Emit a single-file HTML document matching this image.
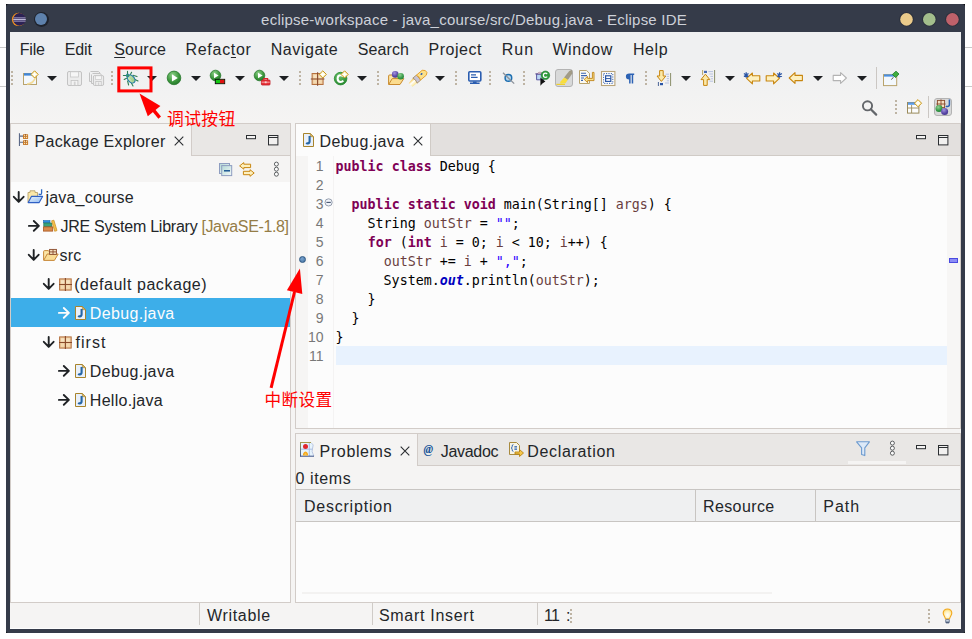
<!DOCTYPE html>
<html lang="zh">
<head>
<meta charset="utf-8">
<title>eclipse-workspace - java_course/src/Debug.java - Eclipse IDE</title>
<style>
html,body{margin:0;padding:0}
body{width:972px;height:639px;position:relative;overflow:hidden;background:#fff;font-family:"Liberation Sans","Noto Sans CJK SC",sans-serif}
.a{position:absolute}
.t{position:absolute;white-space:pre;line-height:20px;font-family:"Liberation Sans","Noto Sans CJK SC",sans-serif}
.t u{text-decoration-thickness:1px;text-underline-offset:2px}
svg{position:absolute;overflow:visible}
.dd{position:absolute;width:0;height:0;border-left:5px solid transparent;border-right:5px solid transparent;border-top:5px solid #1d1f22;top:76px}
.sep{position:absolute;width:2px;height:14px;top:71px;background:repeating-linear-gradient(to bottom,#beb4a4 0,#beb4a4 2px,transparent 2px,transparent 4px)}
.code{position:absolute;left:335.6px;top:157px;letter-spacing:-0.02px;font-family:"DejaVu Sans Mono","Liberation Mono",monospace;font-size:13.33px;line-height:19px;color:#000;white-space:pre}
.code b{color:#7f0055}
.code .s{color:#2a00ff}
.code .v{color:#6a3e3e}
.code .f{color:#0000c0;font-weight:bold;font-style:italic}
.ln{position:absolute;left:296px;width:27.6px;text-align:right;top:157px;font-size:14px;line-height:19px;color:#787878;white-space:pre}
.cn{position:absolute;font-weight:400;font-family:"Liberation Sans","Noto Sans CJK SC",sans-serif;color:#ff0000;white-space:pre;line-height:20px}
</style>
</head>
<body>
<!-- page remnants outside the window -->
<div class="a" style="left:0;top:47px;width:6px;height:1px;background:#c9c9c9"></div>
<div class="a" style="left:0;top:86px;width:6px;height:1px;background:#c9c9c9"></div>
<div class="a" style="left:965px;top:47px;width:7px;height:1px;background:#c9c9c9"></div>
<div class="a" style="left:965px;top:86px;width:7px;height:1px;background:#c9c9c9"></div>
<!-- window frame -->
<div class="a" style="left:6px;top:4px;width:959px;height:629px;background:#0c0d10"></div>
<div class="a" style="left:6px;top:4px;width:959px;height:629px;background:#353b49;border-radius:3px 3px 2px 2px"></div>
<!-- client area -->
<div class="a" style="left:10px;top:32px;width:951px;height:597px;background:#eff0f1"></div>
<div class="a" style="left:10px;top:62px;width:951px;height:62px;background:linear-gradient(to bottom,#eff0f1,#f5f4f3)"></div>
<div class="a" style="left:10px;top:123px;width:951px;height:506px;background:#f5f4f3"></div>
<!-- title bar icons -->
<svg style="left:11px;top:12px" width="16" height="15" viewBox="0 0 16 15"><circle cx="7.6" cy="7.4" r="6.7" fill="#f7941e"/><circle cx="8.5" cy="7.4" r="6.3" fill="#2c2255"/><rect x="2.6" y="5.4" width="12" height="1" fill="#a9a4c8"/><rect x="2.2" y="7" width="12.6" height="1" fill="#bdb9d6"/><rect x="2.6" y="8.6" width="12" height="1" fill="#a9a4c8"/></svg>
<div class="a" style="left:33.8px;top:11.9px;width:14.8px;height:14.8px;border-radius:50%;background:#1f232d"></div>
<div class="a" style="left:35.3px;top:13.4px;width:11.8px;height:11.8px;border-radius:50%;background:#5e81ac"></div>
<svg style="left:895px;top:10px" width="66" height="20" viewBox="0 0 66 20"><circle cx="11.5" cy="9.4" r="7.2" fill="#2a2f3b"/><circle cx="11.5" cy="9.4" r="6.3" fill="#ebcb8b"/><circle cx="34.3" cy="9.4" r="7.2" fill="#2a2f3b"/><circle cx="34.3" cy="9.4" r="6.3" fill="#a3be8c"/><circle cx="57.4" cy="9.4" r="7.2" fill="#2a2f3b"/><circle cx="57.4" cy="9.4" r="6.3" fill="#bf616a"/></svg>
<!-- ===== main toolbar ===== -->
<div class="sep" style="left:11px;top:71px;height:14px"></div>
<svg style="left:23px;top:70px" width="16" height="16" viewBox="0 0 16 16"><rect x="0.5" y="3.5" width="13" height="11" fill="#f3f8fd" stroke="#b9a36c"/><rect x="1" y="3.2" width="12" height="2.4" fill="#3f86d8"/><path d="M4 14Q11 13.5 12.5 7" stroke="#f3dc9a" stroke-width="1.6" fill="none"/><path d="M11.6 0.8000000000000003L15.2 4.4L11.6 8.0L8.0 4.4Z" fill="#fdf3c4" stroke="#c9961d" stroke-width="1"/><path d="M11.6 2.4000000000000004V6.4M9.6 4.4H13.6" stroke="#ffffff" stroke-width="1.2"/></svg>
<div class="dd" style="left:47px"></div>
<svg style="left:67px;top:71px" width="16" height="16" viewBox="0 0 16 16"><path d="M2.0 0.5H13.0Q14.5 0.5 14.5 2V13Q14.5 14.5 13.0 14.5H2.0Q0.5 14.5 0.5 13V2Q0.5 0.5 2.0 0.5Z" fill="#ececec" stroke="#c3c3c3" stroke-width="1"/><rect x="3.5" y="0.8" width="8" height="5.2" fill="#f6f6f6" stroke="#c9c9c9" stroke-width="0.8"/><rect x="4.1" y="9.4" width="6.8" height="5" fill="#f3f3f3" stroke="#c3c3c3" stroke-width="0.8"/><rect x="6.8" y="10.6" width="1.8" height="3.4" fill="#d2d2d2"/></svg>
<svg style="left:89px;top:71px" width="16" height="16" viewBox="0 0 16 16"><path d="M1.5 0.5H9.5L11 2V3" fill="#ececec" stroke="#c3c3c3"/><path d="M0.5 1.5V10.5H3" fill="none" stroke="#c3c3c3"/><path d="M3.5 2.5H11L12.5 4V5" fill="#ececec" stroke="#c3c3c3"/><path d="M2.5 3.5V12.5H5" fill="none" stroke="#c3c3c3"/><path d="M5.6 4.5H13.2Q14.6 4.5 14.6 6V13Q14.6 14.5 13.2 14.5H5.6Q4.4 14.5 4.4 13V6Q4.4 4.5 5.6 4.5Z" fill="#ececec" stroke="#c3c3c3"/><rect x="6.4" y="4.8" width="6" height="3.6" fill="#f6f6f6" stroke="#c9c9c9" stroke-width="0.7"/><rect x="6.8" y="10.4" width="5.4" height="4" fill="#f3f3f3" stroke="#c3c3c3" stroke-width="0.8"/><rect x="8.8" y="11.4" width="1.5" height="2.6" fill="#d2d2d2"/></svg>
<div class="sep" style="left:111px;top:71px;height:14px"></div>
<svg style="left:123px;top:71px" width="16" height="16" viewBox="0 0 16 16"><g stroke="#2f7d52" stroke-width="1.1" fill="none" stroke-linecap="round"><path d="M4.5 3.2V0.4M7.4 3.6L8.6 1.2M3.2 4.5H0.4M4 7L1.2 8.4M4.6 10L5.6 14M8.4 12L10 15M10 4.2L14 5.6M12 8.5L15 10"/></g><linearGradient id="gbug" x1="0" y1="0" x2="1" y2="1"><stop offset="0" stop-color="#e3f3d6"/><stop offset="1" stop-color="#86bf6c"/></linearGradient><ellipse cx="8.2" cy="8" rx="3.1" ry="4.6" transform="rotate(-42 8.2 8)" fill="url(#gbug)" stroke="#1f78a8" stroke-width="1.1"/><path d="M6.6 6.2L10 10" stroke="#9fcf8c" stroke-width="0.8"/><circle cx="4.7" cy="4.5" r="1.5" fill="#3c9a5c" stroke="#1f78a8" stroke-width="0.8"/></svg>
<div class="dd" style="left:147px"></div>
<svg style="left:166px;top:70px" width="16" height="16" viewBox="0 0 16 16"><radialGradient id="g1" cx="0.4" cy="0.3" r="0.8"><stop offset="0" stop-color="#8fd08a"/><stop offset="0.55" stop-color="#3f9a3f"/><stop offset="1" stop-color="#1f6f25"/></radialGradient><circle cx="8" cy="7.9" r="6.8" fill="url(#g1)" stroke="#2a7a2e" stroke-width="0.8"/><path d="M5.952 4.316L11.84 7.9L5.952 11.484000000000002Z" fill="#ffffff"/></svg>
<div class="dd" style="left:191px"></div>
<svg style="left:209px;top:69px" width="17" height="16" viewBox="0 0 17 16"><radialGradient id="g2" cx="0.4" cy="0.3" r="0.8"><stop offset="0" stop-color="#8fd08a"/><stop offset="0.55" stop-color="#3f9a3f"/><stop offset="1" stop-color="#1f6f25"/></radialGradient><circle cx="6.5" cy="6.5" r="5.3" fill="url(#g2)" stroke="#2a7a2e" stroke-width="0.8"/><path d="M5.0 3.6999999999999997L9.6 6.5L5.0 9.3Z" fill="#ffffff"/><rect x="6.3" y="10.3" width="9.4" height="4.4" fill="#12c812" stroke="#0a0a0a" stroke-width="0.9"/><rect x="11" y="10.8" width="4.3" height="3.4" fill="#e01010"/></svg>
<div class="dd" style="left:235px"></div>
<svg style="left:253px;top:69px" width="18" height="17" viewBox="0 0 18 17"><radialGradient id="g3" cx="0.4" cy="0.3" r="0.8"><stop offset="0" stop-color="#8fd08a"/><stop offset="0.55" stop-color="#3f9a3f"/><stop offset="1" stop-color="#1f6f25"/></radialGradient><circle cx="6.5" cy="6.5" r="5.3" fill="url(#g3)" stroke="#2a7a2e" stroke-width="0.8"/><path d="M5.0 3.6999999999999997L9.6 6.5L5.0 9.3Z" fill="#ffffff"/><rect x="8.4" y="11" width="8.6" height="5" rx="0.8" fill="#e8343a" stroke="#c01820" stroke-width="0.8"/><path d="M10.8 11V9.6H14.6V11" fill="none" stroke="#d8222a" stroke-width="1.2"/><path d="M8.6 13.2H16.8" stroke="#f7b0b2" stroke-width="0.9"/><rect x="11.8" y="12.4" width="1.8" height="1.8" fill="#f7d0d0"/></svg>
<div class="dd" style="left:279px"></div>
<div class="sep" style="left:299px;top:71px;height:14px"></div>
<svg style="left:311px;top:70px" width="16" height="16" viewBox="0 0 16 16"><rect x="1.1" y="3.5" width="11" height="11" fill="#ecc79a" stroke="#b5713f"/><rect x="2.4" y="4.8" width="3.4" height="3.4" fill="#f6e2c0"/><rect x="7.3999999999999995" y="4.8" width="3.4" height="3.4" fill="#f6e2c0"/><rect x="2.4" y="9.8" width="3.4" height="3.4" fill="#f3d9b0"/><rect x="7.3999999999999995" y="9.8" width="3.4" height="3.4" fill="#f3d9b0"/><path d="M-0.20000000000000007 9.0H13.4M6.6 2.2V15.8" stroke="#8a4b2c" stroke-width="1.1"/><path d="M11.8 0.8000000000000003L15.4 4.4L11.8 8.0L8.200000000000001 4.4Z" fill="#fdf3c4" stroke="#c9961d" stroke-width="1"/><path d="M11.8 2.4000000000000004V6.4M9.8 4.4H13.8" stroke="#ffffff" stroke-width="1.2"/></svg>
<svg style="left:334px;top:70px" width="16" height="16" viewBox="0 0 16 16"><radialGradient id="g4" cx="0.4" cy="0.3" r="0.8"><stop offset="0" stop-color="#6cc46a"/><stop offset="1" stop-color="#1f7f2a"/></radialGradient><circle cx="6.6" cy="8.6" r="6.3" fill="url(#g4)" stroke="#238a2c" stroke-width="0.8"/><path d="M9.3 6.6Q8.2 5.2 6.6 5.2Q3.6 5.2 3.6 8.6Q3.6 12 6.6 12Q8.2 12 9.3 10.6" fill="none" stroke="#ffffff" stroke-width="2"/><path d="M10.6 0.8000000000000003L14.2 4.4L10.6 8.0L7.0 4.4Z" fill="#fdf3c4" stroke="#c9961d" stroke-width="1"/><path d="M10.6 2.4000000000000004V6.4M8.6 4.4H12.6" stroke="#ffffff" stroke-width="1.2"/></svg>
<div class="dd" style="left:357px"></div>
<div class="sep" style="left:377px;top:71px;height:14px"></div>
<svg style="left:388px;top:70px" width="17" height="16" viewBox="0 0 17 16"><path d="M0.6 14.4V6Q0.6 5 1.6 5H5.6L6.8 6.4H12.4V9" fill="#fbe5a6" stroke="#c98a2e"/><path d="M0.7 14.5L4.2 8.6H15.8L12 14.5Z" fill="#fbdc8e" stroke="#c98a2e" stroke-linejoin="round"/><radialGradient id="g5" cx="0.4" cy="0.3" r="0.8"><stop offset="0" stop-color="#a594de"/><stop offset="0.6" stop-color="#5a48a8"/><stop offset="1" stop-color="#3f2f86"/></radialGradient><circle cx="7.2" cy="4.4" r="3.3" fill="url(#g5)"/><radialGradient id="g6" cx="0.4" cy="0.3" r="0.8"><stop offset="0" stop-color="#93d092"/><stop offset="0.6" stop-color="#379a48"/><stop offset="1" stop-color="#1f7a32"/></radialGradient><circle cx="12.6" cy="6.2" r="3.3" fill="url(#g6)"/></svg>
<svg style="left:410px;top:70px" width="17" height="16" viewBox="0 0 17 16"><linearGradient id="gfl" x1="0" y1="0" x2="0" y2="1"><stop offset="0" stop-color="#f7c23c"/><stop offset="0.45" stop-color="#ffffff"/><stop offset="1" stop-color="#fbe48e"/></linearGradient><g transform="translate(0.1 14.8) rotate(-40.5)"><path d="M0 -2.2L6.8 -3.2V3.2L0.6 3Z" fill="url(#gfl)"/><path d="M6.4 -3.3H11.2V3.3H6.4Q8 0 6.4 -3.3Z" fill="#c9c4d4" stroke="#9a7f4a" stroke-width="0.7"/><path d="M11 -3.2H18.6L20.8 -1V1.6L18.6 3.2H11Q12.6 0 11 -3.2Z" fill="#fbe08a" stroke="#e5a02a" stroke-width="0.9"/><rect x="14.6" y="-1.6" width="2.2" height="1.6" rx="0.6" fill="#2d5fb5"/></g></svg>
<div class="dd" style="left:435px"></div>
<div class="sep" style="left:455px;top:71px;height:14px"></div>
<svg style="left:468px;top:71px" width="14" height="14" viewBox="0 0 14 14"><rect x="0.8" y="0.8" width="12" height="9.2" rx="1" fill="#ffffff" stroke="#2a5db0" stroke-width="1.6"/><path d="M3 3.8H8M3 6.4H9.6" stroke="#2a5db0" stroke-width="1.3"/><path d="M5 10.4H8.6V11.6H11.6V13H2V11.6H5Z" fill="#2a5db0"/></svg>
<div class="sep" style="left:489px;top:71px;height:14px"></div>
<svg style="left:502px;top:72px" width="13" height="13" viewBox="0 0 13 13"><circle cx="6.4" cy="5.9" r="3.3" fill="#b9d8ee" stroke="#1e6fb0" stroke-width="1.5"/><path d="M1 0.8L12.2 11.6" stroke="#8b9099" stroke-width="1.3"/></svg>
<div class="sep" style="left:523px;top:71px;height:14px"></div>
<svg style="left:535px;top:70px" width="16" height="17" viewBox="0 0 16 17"><path d="M1.6 4V9.8H8.6V4Z" fill="#b9d6f3" stroke="#5b58a3" stroke-width="1"/><path d="M0.4 3.9H9.6" stroke="#5b4a8c" stroke-width="1.1"/><path d="M2.8 3.4Q3 2.2 5 2.2Q7 2.2 7.2 3.4" fill="#f6dede" stroke="#b08aa0" stroke-width="0.8"/><circle cx="10.4" cy="5.3" r="4.3" fill="#2f9a3c" stroke="#1e7a2c" stroke-width="0.6"/><path d="M12.2 4Q11.5 3.2 10.4 3.2Q8.4 3.2 8.4 5.3Q8.4 7.4 10.4 7.4Q11.5 7.4 12.2 6.6" fill="none" stroke="#ffffff" stroke-width="1.2"/><path d="M5.4 7.4V15.8L7.4 13.6L10.4 11.6Z" fill="#111111"/></svg>
<div class="a" style="left:555px;top:69px;width:18px;height:18px;box-sizing:border-box;border:1px solid #b3b3b3;border-radius:3px;background:#d8d9d9"></div>
<svg style="left:556px;top:70px" width="16" height="16" viewBox="0 0 16 16"><path d="M13.4 1.2L15.8 0.2L16 3.6L11.6 9.8L8.4 7.6Z" fill="#a29c86" stroke="#8a846e" stroke-width="0.4"/><path d="M8.3 7.4L11.8 9.8L9.6 13.2L4.4 13.8Q3.6 12.6 4.8 11.2Z" fill="#f8de3e"/><path d="M0.4 14.4H9" stroke="#efcf2c" stroke-width="1.2"/></svg>
<svg style="left:579px;top:70px" width="16" height="15" viewBox="0 0 16 15"><path d="M0.5 0.5H7.6L10.5 3.4V13.5H0.5Z" fill="#fbfaf3" stroke="#b9a36c"/><path d="M2 3.2H7M2 5.6H8M2 8H5M2 10.4H4" stroke="#3d64b0" stroke-width="1.1"/><path d="M13.4 2.4V8.4H8.6V6.4L5.2 9.4L8.6 12.6V10.6H15V2.4Z" fill="#fbe38e" stroke="#c0841a" stroke-width="0.9"/></svg>
<svg style="left:601px;top:71px" width="15" height="15" viewBox="0 0 15 15"><rect x="0.5" y="0.5" width="13.4" height="14" fill="#fdfdfb" stroke="#b9a47a" stroke-width="1.1"/><rect x="2.6" y="2.6" width="9.2" height="9.8" fill="none" stroke="#3d64b0" stroke-width="1" stroke-dasharray="1.2 1.2"/><rect x="4.6" y="4.8" width="5.2" height="5.6" fill="#ffffff" stroke="#2a55a5" stroke-width="1.2"/><path d="M4.6 7.6H9.8" stroke="#2a55a5" stroke-width="1"/></svg>
<svg style="left:625px;top:73px" width="10" height="11" viewBox="0 0 10 11"><path d="M4.2 0.6H9.2V2H8.2V10.6H6.7V2H5.6V10.6H4.1V6.4Q0.9 6.2 0.9 3.4Q0.9 0.6 4.2 0.6Z" fill="#2c62b4"/></svg>
<div class="sep" style="left:645px;top:71px;height:14px"></div>
<svg style="left:656px;top:70px" width="16" height="17" viewBox="0 0 16 17"><path d="M9.6 4.2H13M10.8 6.4H13M10.8 8.6H13M10.8 10.8H13M9 13H13" stroke="#b8c2df" stroke-width="1"/><path d="M14.6 3V16" stroke="#8a8f6a" stroke-width="1"/><path d="M2.4 12V16" stroke="#4a6496" stroke-width="1"/><rect x="4" y="13" width="3" height="2.2" fill="#2a55a5"/><path d="M3.6 0.6H7.2V6H9.8L5.4 11.4L1 6H3.6Z" fill="#fbe9a8" stroke="#c8860f" stroke-width="1" stroke-linejoin="round"/></svg>
<div class="dd" style="left:681px"></div>
<svg style="left:700px;top:69px" width="16" height="18" viewBox="0 0 16 18"><path d="M8.4 2.6H13M9.4 5H13M10.4 7.4H13M10.8 9.8H13M9.6 12.2H13" stroke="#b8c2df" stroke-width="1"/><path d="M14.6 1V14" stroke="#8a8f6a" stroke-width="1"/><path d="M2.6 1V6" stroke="#b9a86a" stroke-width="1"/><rect x="4" y="1.8" width="3" height="2.2" fill="#4a6cb0"/><path d="M3.6 16.4H7.2V10.6H9.8L5.4 5.2L1 10.6H3.6Z" fill="#fbe9a8" stroke="#c8860f" stroke-width="1" stroke-linejoin="round"/></svg>
<div class="dd" style="left:725px"></div>
<svg style="left:743px;top:71px" width="18" height="14" viewBox="0 0 18 14"><path d="M9.4 2.0L3.6 7.4L9.4 12.8V10.0H16.8V4.8H9.4Z" fill="#fdf0bf" stroke="#c8860f" stroke-width="1.1" stroke-linejoin="round"/><path d="M3.2 1.2000000000000002V6.8M0.9000000000000004 2.4L5.5 5.6M5.5 2.4L0.9000000000000004 5.6" stroke="#2a55a5" stroke-width="1.2"/></svg>
<svg style="left:765px;top:71px" width="18" height="14" viewBox="0 0 18 14"><path d="M8.6 2.0L14.4 7.4L8.6 12.8V10.0H1.2V4.8H8.6Z" fill="#fdf0bf" stroke="#c8860f" stroke-width="1.1" stroke-linejoin="round"/><path d="M14.6 1.2000000000000002V6.8M12.3 2.4L16.9 5.6M16.9 2.4L12.3 5.6" stroke="#2a55a5" stroke-width="1.2"/></svg>
<svg style="left:788px;top:71px" width="16" height="14" viewBox="0 0 16 14"><path d="M7.0 1.6L1.2 7L7.0 12.4V9.6H14.4V4.4H7.0Z" fill="#fdf0bf" stroke="#c8860f" stroke-width="1.1" stroke-linejoin="round"/></svg>
<div class="dd" style="left:813px"></div>
<svg style="left:832px;top:71px" width="16" height="14" viewBox="0 0 16 14"><path d="M8.6 1.6L14.4 7L8.6 12.4V9.6H1.2V4.4H8.6Z" fill="#ffffff" stroke="#b3b3b3" stroke-width="1.1" stroke-linejoin="round"/></svg>
<div class="dd" style="left:857px"></div>
<div class="a" style="left:876px;top:67px;width:1px;height:22px;background:#cbc7c3"></div>
<svg style="left:883px;top:70px" width="17" height="16" viewBox="0 0 17 16"><rect x="0.5" y="4.6" width="13.2" height="11" fill="#f3f8fd" stroke="#b9a36c"/><rect x="1" y="4.4" width="12.2" height="2.2" fill="#4a8fe0"/><path d="M8.4 9.6L10.4 7.2" stroke="#555" stroke-width="1"/><path d="M9.4 4.4L13 1.2L16 4L12.6 7.6Z" fill="#3fae3f" stroke="#1f7a2a" stroke-width="0.8"/></svg>
<svg style="left:861px;top:99px" width="17" height="17" viewBox="0 0 17 17"><circle cx="6.5" cy="6.8" r="4.6" fill="none" stroke="#63666a" stroke-width="1.9"/><path d="M9.8 10.2L15.2 15.6" stroke="#63666a" stroke-width="2.2" stroke-linecap="round"/></svg>
<div class="sep" style="left:895px;top:100px;height:14px"></div>
<svg style="left:907px;top:99px" width="16" height="16" viewBox="0 0 16 16"><rect x="0.5" y="3.5" width="11.4" height="10.6" fill="#fbfcfd" stroke="#9a8a5a"/><rect x="1" y="3.4" width="10.4" height="2.4" fill="#5a9be6"/><path d="M0.5 9H12M4.6 6V14" stroke="#9a8a5a" stroke-width="0.9"/><path d="M11 0.6000000000000001L14.6 4.2L11 7.800000000000001L7.4 4.2Z" fill="#fdf3c4" stroke="#c9961d" stroke-width="1"/><path d="M11 2.2V6.2M9 4.2H13" stroke="#ffffff" stroke-width="1.2"/></svg>
<div class="a" style="left:928px;top:96px;width:1px;height:22px;background:#cbc7c3"></div>
<div class="a" style="left:934px;top:98px;width:18px;height:18px;box-sizing:border-box;border:1px solid #b3b3b3;border-radius:3px;background:#d8d9d9"></div>
<svg style="left:935px;top:99px" width="16" height="16" viewBox="0 0 16 16"><rect x="2.4" y="1.4" width="7.2" height="7.2" fill="#f3dfc0" stroke="#8a4b2c" stroke-width="0.9"/><path d="M1.4 5H10.6M6 0.4V9.6" stroke="#8a4b2c" stroke-width="0.9"/><path d="M14.4 0.6V5.6Q14.4 7.6 12.4 7.6Q11.4 7.6 11 7" fill="none" stroke="#2c62b4" stroke-width="1.5"/><radialGradient id="g7" cx="0.4" cy="0.3" r="0.8"><stop offset="0" stop-color="#93d092"/><stop offset="0.6" stop-color="#379a48"/><stop offset="1" stop-color="#1f7a32"/></radialGradient><circle cx="4" cy="9.6" r="3.5" fill="url(#g7)"/><radialGradient id="g8" cx="0.4" cy="0.3" r="0.8"><stop offset="0" stop-color="#a594de"/><stop offset="0.6" stop-color="#5a48a8"/><stop offset="1" stop-color="#3f2f86"/></radialGradient><circle cx="9.6" cy="12.4" r="3.5" fill="url(#g8)"/></svg>
<!-- ===== Package Explorer panel ===== -->
<div class="a" style="left:10px;top:123px;width:281px;height:480px;background:#d2ccc8"></div>
<div class="a" style="left:11px;top:124px;width:279px;height:58px;background:#f5f4f3"></div>
<div class="a" style="left:191px;top:124px;width:99px;height:32px;background:#e9e7e5;border-left:1px solid #d2ccc8;border-bottom:1px solid #d2ccc8;box-sizing:border-box"></div>
<div class="a" style="left:11px;top:182px;width:279px;height:420px;background:#fcfcfc"></div>
<div class="a" style="left:11px;top:298px;width:279px;height:29px;background:#3daee9"></div>
<!-- tab icon -->
<svg style="left:18px;top:133px" width="12" height="14" viewBox="0 0 12 14"><path d="M1.45 0.2V13M1.45 3.1H5M1.45 9.3H5" stroke="#5c6a88" stroke-width="1.1" fill="none"/><rect x="5" y="1.2" width="5.1" height="4.7" rx="0.4" fill="#c77a2a"/><rect x="6" y="2.1" width="1.1" height="1.1" fill="#f6e2b8"/><rect x="8" y="2.1" width="1.1" height="1.1" fill="#f6e2b8"/><rect x="6" y="4.0" width="1.1" height="1.1" fill="#f6e2b8"/><rect x="8" y="4.0" width="1.1" height="1.1" fill="#f6e2b8"/><rect x="7.2" y="1.2" width="0.7" height="1" fill="#6b3a12"/><rect x="5" y="7.2" width="5.1" height="4.7" rx="0.4" fill="#c77a2a"/><rect x="6" y="8.1" width="1.1" height="1.1" fill="#f6e2b8"/><rect x="8" y="8.1" width="1.1" height="1.1" fill="#f6e2b8"/><rect x="6" y="10.0" width="1.1" height="1.1" fill="#f6e2b8"/><rect x="8" y="10.0" width="1.1" height="1.1" fill="#f6e2b8"/><rect x="7.2" y="7.2" width="0.7" height="1" fill="#6b3a12"/></svg>
<!-- close x -->
<svg style="left:174px;top:136px" width="10" height="10" viewBox="0 0 10 10"><path d="M0.7 0.7L9.3 9.3M9.3 0.7L0.7 9.3" stroke="#2b2e31" stroke-width="1.1" fill="none"/></svg>
<!-- min / max -->
<svg style="left:246px;top:135px" width="33" height="11" viewBox="0 0 33 11"><rect x="0.5" y="0.5" width="9" height="3.2" fill="#f4f3f2" stroke="#2b2e31" stroke-width="1"/><rect x="22.5" y="0.5" width="9.4" height="9.4" fill="#f1f0ef" stroke="#2b2e31" stroke-width="1"/><path d="M22.5 2.5H32" stroke="#2b2e31" stroke-width="1"/></svg>
<!-- view toolbar: collapse all, link, menu -->
<svg style="left:219px;top:163px" width="13" height="13" viewBox="0 0 13 13"><linearGradient id="gca" x1="0" y1="0" x2="1" y2="1"><stop offset="0" stop-color="#b4d9d6"/><stop offset="1" stop-color="#f2f8f8"/></linearGradient><rect x="0.5" y="0.5" width="10" height="10" fill="url(#gca)" stroke="#8e9dc0"/><rect x="2.7" y="2.6" width="10" height="10" fill="url(#gca)" stroke="#8e9dc0"/><rect x="5" y="7.1" width="6" height="1.4" fill="#0f4d8c"/></svg>
<svg style="left:239px;top:162px" width="16" height="15" viewBox="0 0 16 15"><path d="M0.6 3.9L4.8 0.6V2.2H11.6V5.6H4.8V7.2Z" fill="#fdf0bf" stroke="#c8860f" stroke-width="1" stroke-linejoin="round"/><path d="M15.2 11L11 7.7V9.3H4.4V12.7H11V14.3Z" fill="#fdf0bf" stroke="#c8860f" stroke-width="1" stroke-linejoin="round"/></svg>
<svg style="left:273px;top:161px" width="7" height="16" viewBox="0 0 7 16"><circle cx="3.4" cy="3.1" r="2" fill="#fbfbfb" stroke="#3a3d40" stroke-width="0.8"/><circle cx="3.4" cy="8.2" r="2" fill="#fbfbfb" stroke="#3a3d40" stroke-width="0.8"/><circle cx="3.4" cy="13.2" r="2" fill="#fbfbfb" stroke="#3a3d40" stroke-width="0.8"/></svg>

<!-- ===== Editor panel ===== -->
<div class="a" style="left:295px;top:123px;width:666px;height:306px;background:#d2ccc8"></div>
<div class="a" style="left:296px;top:124px;width:664px;height:32px;background:#e3e0de;border-bottom:1px solid #d0cbc6;box-sizing:border-box"></div>
<div class="a" style="left:296px;top:124px;width:134px;height:32px;background:#fcfcfc;border-right:1px solid #d0cbc6"></div>
<div class="a" style="left:296px;top:156px;width:664px;height:272px;background:#fcfcfc"></div>
<div class="a" style="left:296px;top:156px;width:12px;height:272px;background:#f6f5f4"></div>
<div class="a" style="left:947px;top:156px;width:13px;height:272px;background:#f7f6f5"></div>
<div class="a" style="left:333px;top:156px;width:1px;height:272px;background:#f4f3f3"></div>
<!-- current line -->
<div class="a" style="left:336px;top:346px;width:611px;height:19px;background:#e8f2fe"></div>
<!-- overview ruler mark -->
<div class="a" style="left:949px;top:258px;width:9px;height:5px;background:#8c8cf5;border:1px solid #4a4ae0;box-sizing:border-box"></div>
<!-- editor tab icon (J file) -->
<svg style="left:303px;top:133px" width="11" height="14" viewBox="0 0 11 14"><path d="M0.5 0.5H7.3L10.5 3.7V13.5H0.5Z" fill="#e8f0fb" stroke="#a8842c"/><path d="M7.3 0.6V3.7H10.4Z" fill="#dcb866" stroke="#a8842c" stroke-width="0.6"/><path d="M6.6 3V8.2Q6.6 10.2 4.8 10.4Q3.8 10.5 3.1 10" stroke="#2566a6" stroke-width="2.1" fill="none" /></svg>
<svg style="left:413px;top:136px" width="10" height="10" viewBox="0 0 10 10"><path d="M0.7 0.7L9.3 9.3M9.3 0.7L0.7 9.3" stroke="#2b2e31" stroke-width="1.1" fill="none"/></svg>
<svg style="left:916px;top:135px" width="33" height="11" viewBox="0 0 33 11"><rect x="0.5" y="0.5" width="9" height="3.2" fill="#f4f3f2" stroke="#2b2e31" stroke-width="1"/><rect x="22.5" y="0.5" width="9.4" height="9.4" fill="#f1f0ef" stroke="#2b2e31" stroke-width="1"/><path d="M22.5 2.5H32" stroke="#2b2e31" stroke-width="1"/></svg>
<!-- breakpoint -->
<div class="a" style="left:299px;top:256px;width:7px;height:7px;border-radius:50%;background:radial-gradient(circle at 40% 35%,#7ba3cf,#41719f);border:1px solid #2c5682;box-sizing:border-box"></div>
<!-- fold marker on line 3 -->
<svg style="left:324px;top:198px" width="9" height="9" viewBox="0 0 9 9"><circle cx="4.6" cy="4.4" r="3.6" fill="#f1f4f9" stroke="#8a94a6" stroke-width="0.9"/><path d="M2.4 4.4H6.8" stroke="#42536f" stroke-width="1.1"/></svg>

<!-- ===== Problems panel ===== -->
<div class="a" style="left:295px;top:433px;width:666px;height:170px;background:#d2ccc8"></div>
<div class="a" style="left:296px;top:434px;width:664px;height:56px;background:#f5f4f3"></div>
<div class="a" style="left:417px;top:434px;width:543px;height:32px;background:#e9e7e5;border-left:1px solid #d2ccc8;border-bottom:1px solid #d2ccc8;box-sizing:border-box"></div>
<div class="a" style="left:848px;top:461px;width:58px;height:3px;background:#f5f4f3"></div>
<div class="a" style="left:296px;top:489px;width:664px;height:33px;background:#c8c5c2"></div>
<div class="a" style="left:296px;top:490px;width:399px;height:31px;background:#eff0f1"></div>
<div class="a" style="left:696px;top:490px;width:119px;height:31px;background:#eff0f1"></div>
<div class="a" style="left:816px;top:490px;width:144px;height:31px;background:#eff0f1"></div>
<div class="a" style="left:296px;top:522px;width:664px;height:80px;background:#fcfcfc"></div>
<div class="a" style="left:302px;top:592px;width:470px;height:2px;background:#f3f2f1"></div>
<!-- problems icon -->
<svg style="left:300px;top:442px" width="15" height="15" viewBox="0 0 15 15"><linearGradient id="gpr" gradientUnits="userSpaceOnUse" x1="0" y1="0" x2="0" y2="15"><stop offset="0" stop-color="#a39a4e"/><stop offset="1" stop-color="#3d5796"/></linearGradient><path d="M0.5 0.5H11Q14.6 2.6 12.6 6Q11 9 13.8 14.2H0.5Z" fill="#e6f3fc" stroke="none"/><path d="M11 0.6Q14.6 2.6 12.6 6Q11 9 13.8 14" fill="none" stroke="#b4c2de" stroke-width="0.9"/><path d="M0.3 7.2H12.4M9.3 0.6V14" stroke="#a3b8e2" stroke-width="0.9"/><path d="M0.5 14.4V0.5" stroke="url(#gpr)" stroke-width="1"/><path d="M0 0.5H11" stroke="#a39a4e" stroke-width="1"/><path d="M0 14.2H14" stroke="#3a4f86" stroke-width="1"/><circle cx="5.5" cy="4.4" r="2.5" fill="#e0262c"/><path d="M3 13.6V11.4Q5.5 7.6 8 11.4V13.6Z" fill="#f6a81c"/><path d="M4.2 12.6Q5.5 10.4 6.8 12.6Z" fill="#fde27a"/></svg>
<svg style="left:400px;top:446px" width="10" height="10" viewBox="0 0 10 10"><path d="M0.7 0.7L9.3 9.3M9.3 0.7L0.7 9.3" stroke="#2b2e31" stroke-width="1.1" fill="none"/></svg>
<div class="a" style="left:423.6px;top:441px;font-family:'Liberation Serif',serif;font-weight:700;font-style:italic;font-size:11.5px;line-height:16px;color:#17559a">@</div>
<!-- declaration icon -->
<svg style="left:508.6px;top:442px" width="15" height="15" viewBox="0 0 15 15"><path d="M0.5 0.5H7.5L10.5 3.5V12.5H0.5Z" fill="#f7f4e6" stroke="#a88a3e"/><path d="M4.4 2.6Q3 2.6 3.2 4.4Q3.3 5.8 2.2 6Q3.3 6.2 3.2 7.6Q3 9.4 4.4 9.4" fill="none" stroke="#2c62b4" stroke-width="1"/><path d="M5.4 4.6H8M5.4 6H8M5.4 7.4H8" stroke="#2c62b4" stroke-width="0.9"/><path d="M6 10H10.5V7.5L14.5 11L10.5 14.5V12H6Z" fill="#f5c64a" stroke="#b98313" stroke-width="0.9"/></svg>
<!-- filter / menu / min / max -->
<svg style="left:856px;top:441px" width="14" height="16" viewBox="0 0 14 16"><path d="M0.6 0.8H13.4L8.8 6.8V14.6L5.6 13.6V6.8Z" fill="#dce9f8" stroke="#6d9bcf" stroke-width="1.1" stroke-linejoin="round"/></svg>
<svg style="left:888.6px;top:440.4px" width="7" height="16" viewBox="0 0 7 16"><circle cx="3.4" cy="3.1" r="2" fill="#fbfbfb" stroke="#3a3d40" stroke-width="0.8"/><circle cx="3.4" cy="8.2" r="2" fill="#fbfbfb" stroke="#3a3d40" stroke-width="0.8"/><circle cx="3.4" cy="13.2" r="2" fill="#fbfbfb" stroke="#3a3d40" stroke-width="0.8"/></svg>
<svg style="left:916px;top:445px" width="33" height="11" viewBox="0 0 33 11"><rect x="0.5" y="0.5" width="9" height="3.2" fill="#f4f3f2" stroke="#2b2e31" stroke-width="1"/><rect x="22.5" y="0.5" width="9.4" height="9.4" fill="#f1f0ef" stroke="#2b2e31" stroke-width="1"/><path d="M22.5 2.5H32" stroke="#2b2e31" stroke-width="1"/></svg>

<!-- ===== Status bar ===== -->
<div class="a" style="left:10px;top:603px;width:951px;height:25px;background:#f5f4f3"></div>
<div class="a" style="left:10px;top:628px;width:951px;height:1px;background:#fdfdfd"></div>
<div class="a" style="left:199px;top:603px;width:1px;height:22px;background:#cfcbc7"></div>
<div class="a" style="left:372px;top:603px;width:1px;height:22px;background:#cfcbc7"></div>
<div class="a" style="left:537px;top:603px;width:1px;height:22px;background:#cfcbc7"></div>
<div class="sep" style="left:570px;top:609px;height:14px"></div>
<div class="sep" style="left:928px;top:609px;height:14px"></div>
<!-- light bulb -->
<svg style="left:942px;top:608px" width="11" height="17" viewBox="0 0 11 17"><radialGradient id="gb" cx="0.5" cy="0.6" r="0.6"><stop offset="0" stop-color="#ffffff"/><stop offset="0.6" stop-color="#fff1b8"/><stop offset="1" stop-color="#fbd66a"/></radialGradient><path d="M5.5 1C2.9 1 1.2 2.9 1.2 5.1C1.2 7.2 2.9 8.4 3.5 11H7.5C8.1 8.4 9.8 7.2 9.8 5.1C9.8 2.9 8.1 1 5.5 1Z" fill="url(#gb)" stroke="#f2a71b" stroke-width="1.1"/><rect x="3.7" y="11.4" width="3.6" height="3.4" rx="0.6" fill="#c9d3e2" stroke="#5a6a86" stroke-width="0.8"/><rect x="3.9" y="13.6" width="3.2" height="1.6" fill="#4f5f7c"/></svg>
<!-- ===== tree icons ===== -->
<svg style="left:13.3px;top:191.2px" width="12" height="12" viewBox="0 0 12 12"><path d="M5.7 0.9V10.4M0.8 5.8L5.7 10.9L10.6 5.8" stroke="#1f2225" stroke-width="1.9" stroke-linecap="round" stroke-linejoin="round" fill="none"/></svg>
<svg style="left:27px;top:189px" width="16" height="15" viewBox="0 0 16 15"><linearGradient id="gpf" x1="0" y1="0" x2="1" y2="1"><stop offset="0" stop-color="#eaf3fe"/><stop offset="1" stop-color="#8fbaf0"/></linearGradient><path d="M1 13.5V3.5H3V1.8H8V3.5H10.5V7" fill="#fbe7a8" stroke="#b9a36c" stroke-width="0.9"/><path d="M1.2 13.6L4.4 7.4H15.6L12.2 13.6Z" fill="url(#gpf)" stroke="#2f5fc4" stroke-width="1.1" stroke-linejoin="round"/><path d="M14.6 0.2V4Q14.6 5.6 13.1 5.6Q12.1 5.6 11.7 4.8" stroke="#2f6ac2" stroke-width="1.3" fill="none"/></svg>
<svg style="left:27.9px;top:220.2px" width="12" height="12" viewBox="0 0 12 12"><path d="M0.9 5.9H10.4M5.8 1L10.9 5.9L5.8 10.8" stroke="#1f2225" stroke-width="1.9" stroke-linecap="round" stroke-linejoin="round" fill="none"/></svg>
<svg style="left:43px;top:220px" width="15" height="12" viewBox="0 0 15 12"><rect x="0.5" y="0.6" width="6.5" height="2.2" fill="#2b8fe0" stroke="#1a63b0" stroke-width="0.6"/><rect x="0.8" y="3" width="8" height="3.6" fill="#3aa27a" stroke="#1f7556" stroke-width="0.7"/><rect x="0.5" y="6.9" width="9.2" height="4.2" fill="#d98a4a" stroke="#a8551f" stroke-width="0.8"/><path d="M8.6 0.8L10.9 0.2L14 10.6L11.7 11.3Z" fill="#f2c04d" stroke="#c98a1b" stroke-width="0.7"/></svg>
<svg style="left:28.1px;top:249.2px" width="12" height="12" viewBox="0 0 12 12"><path d="M5.7 0.9V10.4M0.8 5.8L5.7 10.9L10.6 5.8" stroke="#1f2225" stroke-width="1.9" stroke-linecap="round" stroke-linejoin="round" fill="none"/></svg>
<svg style="left:43px;top:249px" width="16" height="12" viewBox="0 0 16 12"><path d="M0.6 11V2.6Q0.6 1.6 1.6 1.6H5.4L6.6 3H11V5" fill="#fbe5a6" stroke="#c8893a" stroke-width="1"/><path d="M0.7 11.4L4.2 5H15.2L11.4 11.4Z" fill="#f9dc94" stroke="#c8893a" stroke-width="1" stroke-linejoin="round"/><rect x="6.6" y="0.4" width="6.8" height="5" fill="#f5e3c2" stroke="#8a4b2c" stroke-width="0.9"/><path d="M6.6 2.9H13.4M10 0.4V5.4" stroke="#8a4b2c" stroke-width="0.9"/></svg>
<svg style="left:43.4px;top:278.2px" width="12" height="12" viewBox="0 0 12 12"><path d="M5.7 0.9V10.4M0.8 5.8L5.7 10.9L10.6 5.8" stroke="#1f2225" stroke-width="1.9" stroke-linecap="round" stroke-linejoin="round" fill="none"/></svg>
<svg style="left:59px;top:277.8px" width="13" height="13" viewBox="0 0 13 13"><rect x="0.6" y="0.9" width="11.6" height="11.2" fill="#ecc79a" stroke="#b5713f" stroke-width="1"/><rect x="2" y="2.2" width="3.6" height="3.4" fill="#f6e2c0"/><rect x="7.2" y="2.2" width="3.6" height="3.4" fill="#f6e2c0"/><rect x="2" y="7.4" width="3.6" height="3.4" fill="#f3d9b0"/><rect x="7.2" y="7.4" width="3.6" height="3.4" fill="#f3d9b0"/><path d="M0 6.5H13M6.4 0V13" stroke="#8a4b2c" stroke-width="1.1"/></svg>
<svg style="left:57.9px;top:307.2px" width="12" height="12" viewBox="0 0 12 12"><path d="M0.9 5.9H10.4M5.8 1L10.9 5.9L5.8 10.8" stroke="#fcfcfc" stroke-width="1.9" stroke-linecap="round" stroke-linejoin="round" fill="none"/></svg>
<svg style="left:75px;top:306px" width="11" height="14" viewBox="0 0 11 14"><path d="M0.5 0.5H7.3L10.5 3.7V13.5H0.5Z" fill="#e8f0fb" stroke="#a8842c"/><path d="M7.3 0.6V3.7H10.4Z" fill="#dcb866" stroke="#a8842c" stroke-width="0.6"/><path d="M6.6 3V8.2Q6.6 10.2 4.8 10.4Q3.8 10.5 3.1 10" stroke="#2566a6" stroke-width="2.1" fill="none" /></svg>
<svg style="left:43.4px;top:336.2px" width="12" height="12" viewBox="0 0 12 12"><path d="M5.7 0.9V10.4M0.8 5.8L5.7 10.9L10.6 5.8" stroke="#1f2225" stroke-width="1.9" stroke-linecap="round" stroke-linejoin="round" fill="none"/></svg>
<svg style="left:59px;top:335.8px" width="13" height="13" viewBox="0 0 13 13"><rect x="0.6" y="0.9" width="11.6" height="11.2" fill="#ecc79a" stroke="#b5713f" stroke-width="1"/><rect x="2" y="2.2" width="3.6" height="3.4" fill="#f6e2c0"/><rect x="7.2" y="2.2" width="3.6" height="3.4" fill="#f6e2c0"/><rect x="2" y="7.4" width="3.6" height="3.4" fill="#f3d9b0"/><rect x="7.2" y="7.4" width="3.6" height="3.4" fill="#f3d9b0"/><path d="M0 6.5H13M6.4 0V13" stroke="#8a4b2c" stroke-width="1.1"/></svg>
<svg style="left:57.9px;top:365.2px" width="12" height="12" viewBox="0 0 12 12"><path d="M0.9 5.9H10.4M5.8 1L10.9 5.9L5.8 10.8" stroke="#1f2225" stroke-width="1.9" stroke-linecap="round" stroke-linejoin="round" fill="none"/></svg>
<svg style="left:75px;top:364px" width="11" height="14" viewBox="0 0 11 14"><path d="M0.5 0.5H7.3L10.5 3.7V13.5H0.5Z" fill="#e8f0fb" stroke="#a8842c"/><path d="M7.3 0.6V3.7H10.4Z" fill="#dcb866" stroke="#a8842c" stroke-width="0.6"/><path d="M6.6 3V8.2Q6.6 10.2 4.8 10.4Q3.8 10.5 3.1 10" stroke="#2566a6" stroke-width="2.1" fill="none" /></svg>
<svg style="left:57.9px;top:394.2px" width="12" height="12" viewBox="0 0 12 12"><path d="M0.9 5.9H10.4M5.8 1L10.9 5.9L5.8 10.8" stroke="#1f2225" stroke-width="1.9" stroke-linecap="round" stroke-linejoin="round" fill="none"/></svg>
<svg style="left:75px;top:393px" width="11" height="14" viewBox="0 0 11 14"><path d="M0.5 0.5H7.3L10.5 3.7V13.5H0.5Z" fill="#e8f0fb" stroke="#a8842c"/><path d="M7.3 0.6V3.7H10.4Z" fill="#dcb866" stroke="#a8842c" stroke-width="0.6"/><path d="M6.6 3V8.2Q6.6 10.2 4.8 10.4Q3.8 10.5 3.1 10" stroke="#2566a6" stroke-width="2.1" fill="none" /></svg>
<!-- line numbers -->
<div class="ln">1
2
3
4
5
6
7
8
9
10
11</div>
<!-- source -->
<div class="code"><b>public</b> <b>class</b> Debug {

  <b>public</b> <b>static</b> <b>void</b> main(String[] <span class="v">args</span>) {
    String <span class="v">outStr</span> = <span class="s">""</span>;
    <b>for</b> (<b>int</b> <span class="v">i</span> = 0; <span class="v">i</span> &lt; 10; <span class="v">i</span>++) {
      <span class="v">outStr</span> += <span class="v">i</span> + <span class="s">","</span>;
      System.<span class="f">out</span>.println(<span class="v">outStr</span>);
    }
  }
}
</div>
<!-- texts -->
<div class="t" style="left:261.10px;top:10px;font-size:15px;color:#cdd1d9;letter-spacing:0.22px;">eclipse-workspace - java_course/src/Debug.java - Eclipse IDE</div>
<div class="t" style="left:19.70px;top:40px;font-size:16px;color:#232629;letter-spacing:-0.17px;">File</div>
<div class="t" style="left:64.70px;top:40px;font-size:16px;color:#232629;letter-spacing:-0.10px;">Edit</div>
<div class="t" style="left:114.20px;top:40px;font-size:16px;color:#232629;letter-spacing:0.22px;"><u>S</u>ource</div>
<div class="t" style="left:185.50px;top:40px;font-size:16px;color:#232629;letter-spacing:0.71px;">Refac<u>t</u>or</div>
<div class="t" style="left:270.70px;top:40px;font-size:16px;color:#232629;letter-spacing:0.56px;">Navigate</div>
<div class="t" style="left:357.70px;top:40px;font-size:16px;color:#232629;letter-spacing:0.12px;">Search</div>
<div class="t" style="left:428.50px;top:40px;font-size:16px;color:#232629;letter-spacing:0.53px;">Project</div>
<div class="t" style="left:501.80px;top:40px;font-size:16px;color:#232629;letter-spacing:0.95px;">Run</div>
<div class="t" style="left:552.40px;top:40px;font-size:16px;color:#232629;letter-spacing:0.60px;">Window</div>
<div class="t" style="left:632.90px;top:40px;font-size:16px;color:#232629;letter-spacing:0.63px;">Help</div>
<div class="t" style="left:34.60px;top:132px;font-size:16px;color:#232629;letter-spacing:0.29px;">Package Explorer</div>
<div class="t" style="left:45.50px;top:188px;font-size:16px;color:#232629;letter-spacing:0.19px;">java_course</div>
<div class="t" style="left:60.40px;top:217px;font-size:16px;color:#232629;letter-spacing:-0.24px;">JRE System Library</div>
<div class="t" style="left:201.40px;top:217px;font-size:16px;color:#957d47;letter-spacing:-0.36px;">[JavaSE-1.8]</div>
<div class="t" style="left:59.40px;top:246px;font-size:16px;color:#232629;letter-spacing:0.30px;">src</div>
<div class="t" style="left:74.20px;top:275px;font-size:16px;color:#232629;letter-spacing:0.55px;">(default package)</div>
<div class="t" style="left:89.80px;top:304px;font-size:16px;color:#fcfcfc;letter-spacing:0.38px;">Debug.java</div>
<div class="t" style="left:75.50px;top:333px;font-size:16px;color:#232629;letter-spacing:1.05px;">first</div>
<div class="t" style="left:89.80px;top:362px;font-size:16px;color:#232629;letter-spacing:0.38px;">Debug.java</div>
<div class="t" style="left:89.80px;top:391px;font-size:16px;color:#232629;letter-spacing:0.30px;">Hello.java</div>
<div class="t" style="left:319.60px;top:132px;font-size:16px;color:#232629;letter-spacing:0.39px;">Debug.java</div>
<div class="t" style="left:319.60px;top:442px;font-size:16px;color:#232629;letter-spacing:0.63px;">Problems</div>
<div class="t" style="left:440.70px;top:442px;font-size:16px;color:#232629;letter-spacing:-0.30px;">Javadoc</div>
<div class="t" style="left:527.30px;top:442px;font-size:16px;color:#232629;letter-spacing:0.67px;">Declaration</div>
<div class="t" style="left:295.60px;top:469px;font-size:16px;color:#232629;letter-spacing:0.58px;">0 items</div>
<div class="t" style="left:303.90px;top:497px;font-size:16px;color:#232629;letter-spacing:0.79px;">Description</div>
<div class="t" style="left:703.00px;top:497px;font-size:16px;color:#232629;letter-spacing:0.39px;">Resource</div>
<div class="t" style="left:823.30px;top:497px;font-size:16px;color:#232629;letter-spacing:1.00px;">Path</div>
<div class="t" style="left:207.00px;top:606px;font-size:16px;color:#232629;letter-spacing:0.67px;">Writable</div>
<div class="t" style="left:378.90px;top:606px;font-size:16px;color:#232629;letter-spacing:0.71px;">Smart Insert</div>
<div class="t" style="left:543.95px;top:606px;font-size:16px;color:#232629;letter-spacing:-0.60px;">11</div>
<div class="t" style="left:565.90px;top:606px;font-size:16px;color:#232629;letter-spacing:0.00px;">:</div>
<!-- ===== red annotations ===== -->
<svg style="left:0;top:0" width="972" height="639" viewBox="0 0 972 639">
<rect x="118.8" y="67.9" width="32.2" height="23" fill="none" stroke="#ff0000" stroke-width="3"/>
<path d="M159.7 117.6L153.5 110.2" stroke="#ff0000" stroke-width="3.4" fill="none"/>
<path d="M139.5 93.4L160.4 106.1L147.8 116.2Z" fill="#ff0000"/>
<path d="M271.1 387.9L294.5 292" stroke="#ff0000" stroke-width="3" fill="none"/>
<path d="M299.9 268.6L302.3 294L286.9 290.2Z" fill="#ff0000"/>
</svg>
<div class="cn" style="left:167px;top:110px;font-size:16.8px;letter-spacing:0.4px">调试按钮</div>
<div class="cn" style="left:264.6px;top:391px;font-size:16.6px;letter-spacing:0.4px">中断设置</div>
</body></html>
